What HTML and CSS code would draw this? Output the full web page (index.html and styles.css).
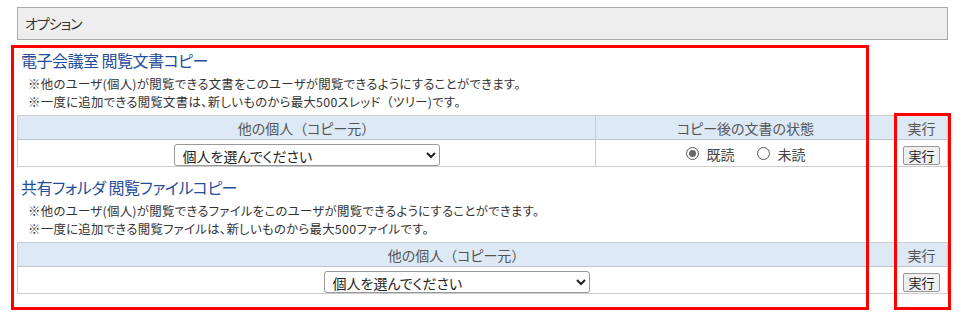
FILE: index.html
```html
<!DOCTYPE html>
<html lang="ja">
<head>
    <meta charset="UTF-8">
    <title>オプション</title>
    <link rel="stylesheet" href="styles.css">
</head>
<body>
    <div class="page">
        <div class="option-bar">オプション</div>

        <div class="section">
            <h3 class="section-title">電子会議室 閲覧文書コピー</h3>
            <div class="notes">
                <p>※他のユーザ(個人)が閲覧できる文書をこのユーザが閲覧できるようにすることができます。</p>
                <p>※一度に追加できる閲覧文書は、新しいものから最大500スレッド<span class="fw">（</span>ツリー)です。</p>
            </div>
            <table class="copy-table">
                <thead>
                    <tr>
                        <th>他の個人<span class="fw">（</span>コピー元<span class="fw">）</span></th>
                        <th class="col-state">コピー後の文書の状態</th>
                        <th class="col-run">実行</th>
                    </tr>
                </thead>
                <tbody>
                    <tr>
                        <td>
                            <select class="user-select">
                                <option>個人を選んでください</option>
                            </select>
                        </td>
                        <td>
                            <span class="radio-group">
                                <label class="radio"><span class="radio-mark checked"></span>既読</label>
                                <label class="radio"><span class="radio-mark"></span>未読</label>
                            </span>
                        </td>
                        <td><button class="run-btn">実行</button></td>
                    </tr>
                </tbody>
            </table>
        </div>

        <div class="section">
            <h3 class="section-title">共有フォルダ 閲覧ファイルコピー</h3>
            <div class="notes">
                <p>※他のユーザ(個人)が閲覧できるファイルをこのユーザが閲覧できるようにすることができます。</p>
                <p>※一度に追加できる閲覧ファイルは、新しいものから最大500ファイルです。</p>
            </div>
            <table class="copy-table">
                <thead>
                    <tr>
                        <th>他の個人<span class="fw">（</span>コピー元<span class="fw">）</span></th>
                        <th class="col-run">実行</th>
                    </tr>
                </thead>
                <tbody>
                    <tr>
                        <td>
                            <select class="user-select">
                                <option>個人を選んでください</option>
                            </select>
                        </td>
                        <td><button class="run-btn">実行</button></td>
                    </tr>
                </tbody>
            </table>
        </div>

        <div class="mark mark-main"></div>
        <div class="mark mark-run"></div>
    </div>
</body>
</html>
```

FILE: styles.css
```css
body {
    margin: 0;
    font-family: "Noto Sans CJK JP", sans-serif;
    font-feature-settings: "palt";
    color: #333;
    background-color: #fff;
}
.page {
    position: relative;
    padding: 7px 16px 30px 17px;
}
.fw {
    font-feature-settings: normal;
}
.option-bar {
    height: 31px;
    line-height: 31px;
    padding-left: 7px;
    font-size: 14px;
    letter-spacing: -1px;
    border: 1px solid #aaa;
    background-color: #eee;
}
.section-title {
    margin: 10px 0 0 4px;
    font-size: 16px;
    font-weight: normal;
    line-height: 20px;
    letter-spacing: -0.5px;
    color: #1f4e9c;
}
.notes {
    margin: 5px 0 4px 11px;
    font-size: 12.4px;
    letter-spacing: 0.3px;
    line-height: 18px;
}
.notes p {
    margin: 0;
}
.copy-table {
    width: 100%;
    border-collapse: collapse;
    table-layout: fixed;
}
.copy-table th, .copy-table td {
    border: 1px solid #ccc;
    text-align: center;
    padding: 0;
}
.copy-table th {
    height: 23px;
    font-size: 14px;
    font-weight: normal;
    color: #555;
    background-color: #dde9f5;
    border-bottom-color: #b9c6d3;
}
.copy-table td {
    height: 26px;
}
.col-state {
    width: 299px;
}
.col-run {
    width: 51px;
}
.user-select {
    width: 266px;
    height: 22px;
    font-family: inherit;
    font-feature-settings: "palt";
    font-size: 14px;
    color: #222;
    border: 1px solid #999;
    border-radius: 3px;
    background-color: #fff;
    padding: 0 4px;
    vertical-align: middle;
}
.radio-group {
    display: inline-flex;
    gap: 22px;
    font-size: 14px;
    color: #444;
}
.radio {
    display: inline-flex;
    align-items: center;
    gap: 8px;
}
.radio-mark {
    width: 11px;
    height: 11px;
    border: 1px solid #555;
    border-radius: 50%;
    position: relative;
    background-color: #fff;
}
.radio-mark.checked::after {
    content: "";
    position: absolute;
    left: 2px;
    top: 2px;
    width: 7px;
    height: 7px;
    border-radius: 50%;
    background-color: #666;
}
.run-btn {
    width: 37px;
    height: 19px;
    padding: 0;
    font-family: inherit;
    font-size: 13px;
    line-height: 17px;
    color: #222;
    border: 1px solid #999;
    border-radius: 2px;
    background-color: #efefef;
    vertical-align: middle;
}
.mark {
    position: absolute;
    border: 3px solid #f00;
}
.mark-main {
    left: 11px;
    top: 45px;
    width: 852px;
    height: 259px;
}
.mark-run {
    left: 894px;
    top: 113px;
    width: 51px;
    height: 191px;
}
```
